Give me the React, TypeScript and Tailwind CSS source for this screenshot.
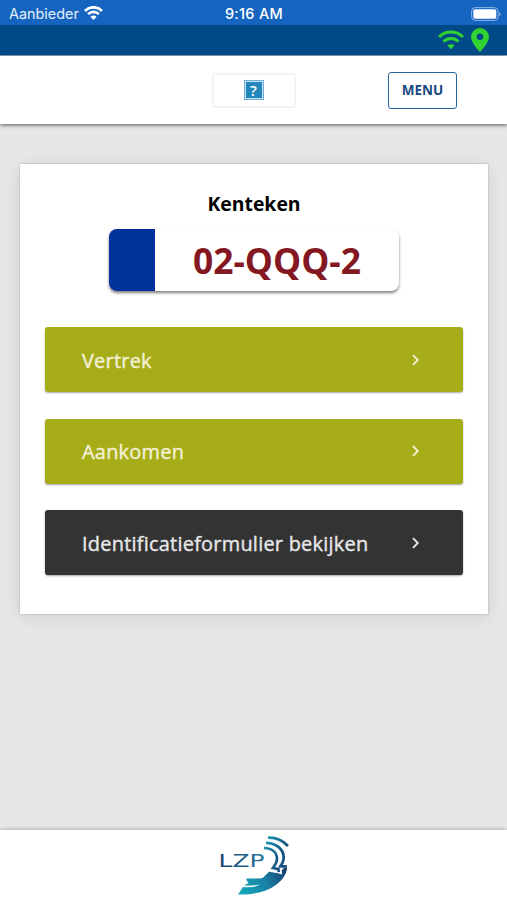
import React from 'react';

type WifiProps = { className: string; width: number; height: number };

function StatusWifi({ className, width, height }: WifiProps) {
  return (
    <svg className={className} width={width} height={height} viewBox="0 0 19 14" fill="none" stroke="currentColor">
      <path d="M1 4.9C5.8.1 13.2.1 18 4.900" strokeWidth="2.800" />
      <path d="M4.100 8.100c3-3 7.800-3 10.800 0" strokeWidth="2.600" />
      <path d="M9.500 13.900 6.400 10.700c1.700-1.600 4.500-1.600 6.200 0z" fill="currentColor" stroke="none" />
    </svg>
  );
}

function SignalWifi() {
  return (
    <svg className="text-[#32d232]" width="26" height="20" viewBox="0 0 26 20" fill="none" stroke="currentColor">
      <path d="M1.100 6.900C8 .5 18 .5 24.900 6.900" strokeWidth="3" />
      <path d="M5.500 11.500c4.300-4 10.700-4 15 0" strokeWidth="3" />
      <path d="M13 19.200l-3.500-3.600c1.900-1.800 5.100-1.800 7 0z" fill="currentColor" stroke="none" />
    </svg>
  );
}

function Pin() {
  return (
    <svg width="18" height="24" viewBox="0 0 18 24" fill="#32d232">
      <path fillRule="evenodd" d="M9 0a9 9 0 0 0-9 9c0 5.800 9 15 9 15s9-9.200 9-15a9 9 0 0 0-9-9zm0 5.400a3.300 3.300 0 1 1 0 6.600 3.300 3.300 0 0 1 0-6.600z" />
    </svg>
  );
}

function Battery() {
  return (
    <svg width="30" height="14" viewBox="0 0 30 14">
      <rect x=".6" y=".6" width="26.500" height="12.800" rx="3.800" fill="none" stroke="#8fb4e3" strokeWidth="1" />
      <rect x="2.300" y="2.200" width="23" height="9.500" rx="2" fill="#fff" />
      <path d="M28.300 4.700c1.600.5 1.600 4 0 4.600z" fill="#8fb4e3" />
    </svg>
  );
}

function Logo() {
  return (
    <svg width="72" height="62" viewBox="0 0 72 62">
      <defs>
        <linearGradient id="arc" gradientUnits="userSpaceOnUse" x1="46" y1="0" x2="68" y2="10">
          <stop offset="0" stopColor="#18a3bd" />
          <stop offset="1" stopColor="#17517f" />
        </linearGradient>
        <linearGradient id="hand" gradientUnits="userSpaceOnUse" x1="22" y1="57" x2="67" y2="33">
          <stop offset="0" stopColor="#13a9bd" />
          <stop offset=".55" stopColor="#1a7fa3" />
          <stop offset="1" stopColor="#173f70" />
        </linearGradient>
        <linearGradient id="word" x1="0" y1="0" x2="1" y2="0">
          <stop offset="0" stopColor="#173f6a" />
          <stop offset="1" stopColor="#267aa1" />
        </linearGradient>
      </defs>
      <text x="0.500" y="30.700" fill="url(#word)" fontFamily="DejaVu Sans, sans-serif" fontSize="17" textLength="46" lengthAdjust="spacingAndGlyphs">LZP</text>
      <g fill="none" stroke="url(#arc)" strokeWidth="2.700">
        <path d="M50 1.600c8-.3 14.500 2.400 20 8.400" />
        <path d="M48 6.800c10 .2 17.200 6 17.700 14 .2 3.500-1.200 6.500-3.300 9.500h6.500" />
        <path d="M46 11.800c8.500.5 13 5 13 11 0 3.500-2 6.500-4.100 9.200l5.500 1.200.3 3" />
      </g>
      <path d="M28.500 42.600h13.500c4-.3 6.300-4.800 9-6.900l9 1.500 4 1.300-.3-4.300 2.500-2.500h3c-1 7.500-5.200 12.800-11.700 17.500-9.500 6.700-22 9.700-37.500 9.300l5-7.500c6 .8 12.500.4 17.300-2.800-5.200 1.300-10.700 1.700-16.800 1.100 2.800-.6 4.200-1.600 5-2.800-1.500-.8-2.300-2-2-3.900z" fill="url(#hand)" />
    </svg>
  );
}

function Action({ label, color }: { label: string; color: string }) {
  return (
    <button className={`flex h-[65px] w-full items-center justify-between rounded-[3px] pl-[37px] pr-[42px] text-left shadow-[0_1px_2px_rgba(0,0,0,0.35)] ${color}`}>
      <span className="pt-[2px] text-[19.900px] leading-7 tracking-[0.26px] whitespace-nowrap [-webkit-text-stroke:0.4px_currentColor]">{label}</span>
      <svg width="10" height="14" viewBox="0 0 10 14" fill="none" stroke="currentColor" strokeWidth="1.900">
        <path d="M2 2.200 6.800 7 2 11.800" />
      </svg>
    </button>
  );
}

export default function App() {
  return (
    <div className="flex h-[900px] w-[507px] flex-col overflow-hidden bg-[#e7e7e7] font-['Open_Sans',sans-serif]">
      <div className="grid h-[25px] shrink-0 grid-cols-3 items-center bg-[#1565c0] pt-[2px] font-['Inter',sans-serif] text-[14px] text-white">
        <div className="flex items-center gap-[5px] pl-[9px]">
          <span className="text-[14.400px] text-[#e3edf9]">Aanbieder</span>
          <StatusWifi className="text-white" width={19} height={14} />
        </div>
        <span className="pl-px text-center text-[14.500px] font-medium tracking-[0.3px] whitespace-nowrap">9:16 AM</span>
        <div className="flex justify-end pr-[6px]"><Battery /></div>
      </div>
      <div className="flex h-[31px] shrink-0 items-center justify-end gap-[7px] border-b border-[#8fafc9] bg-[#004b87] pr-[18px]">
        <SignalWifi />
        <Pin />
      </div>
      <header className="z-10 grid h-[68px] shrink-0 grid-cols-[1fr_84px_1fr] items-center bg-white shadow-[0_1px_4px_rgba(0,0,0,0.65)]">
        <div />
        <div className="flex h-[35px] items-center justify-center rounded-[2px] border-2 border-[#f3f3f3]">
          <div className="flex h-5 w-5 items-center justify-center border border-[#72addb] bg-[#c5e3f5] p-px">
            <div className="flex h-full w-full items-center justify-center bg-[#2387bb] text-[15px] leading-none font-semibold text-white">?</div>
          </div>
        </div>
        <div className="flex justify-end pr-[50px]">
          <button className="h-[37px] w-[69px] rounded-[3px] border border-[#29659b] pt-px text-[13.500px] font-bold text-[#164c80]">MENU</button>
        </div>
      </header>
      <main className="flex-1 px-5 pt-10">
        <section className="flex h-[450px] w-[468px] flex-col items-center bg-white px-[25px] pt-[26px] shadow-[0_0_2px_rgba(0,0,0,0.25),0_3px_18px_rgba(0,0,0,0.1)]">
          <h1 className="text-[19.400px] leading-[27px] font-bold text-black">Kenteken</h1>
          <div className="mt-[12px] flex h-[62px] w-[290px] overflow-hidden rounded-[8px] bg-white shadow-[0_2px_3px_rgba(0,0,0,0.5)]">
            <div className="w-[46px] bg-[#003399]" />
            <div className="flex flex-1 items-center justify-center pt-[2px] text-[35.400px] leading-none font-bold text-[#841822]">02-QQQ-2</div>
          </div>
          <div className="mt-9 flex w-full flex-col gap-[26.700px]">
            <Action label="Vertrek" color="bg-[#a6ad19] text-[#f3f0d5]" />
            <Action label="Aankomen" color="bg-[#a6ad19] text-[#f3f0d5]" />
            <Action label="Identificatieformulier bekijken" color="bg-[#333333] text-[#e7e7e7]" />
          </div>
        </section>
      </main>
      <footer className="flex h-[70px] shrink-0 justify-center bg-white pt-[6px] shadow-[0_-1px_4px_rgba(0,0,0,0.22)]">
        <Logo />
      </footer>
    </div>
  );
}
